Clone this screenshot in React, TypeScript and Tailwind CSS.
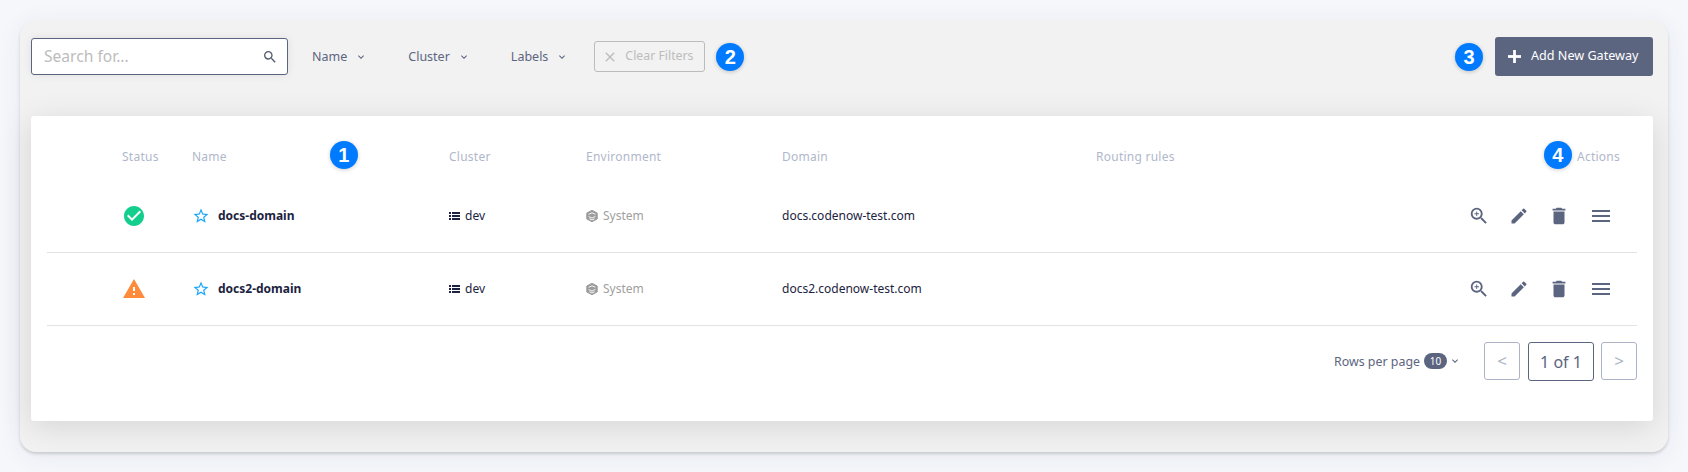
import React from "react";
import { MdZoomIn, MdEdit, MdDelete, MdMenu, MdStarBorder, MdCheckCircle, MdWarning, MdClose, MdSearch, MdKeyboardArrowDown } from "react-icons/md";

const Badge = ({ n, className = "" }: { n: string; className?: string }) => (
  <span className={"flex h-[28px] w-[28px] items-center justify-center rounded-full bg-[#007bff] text-[20px] font-bold leading-none text-white shadow-[0_1px_4px_rgba(0,0,0,0.2)] font-['Liberation_Sans',sans-serif] " + className}>{n}</span>
);

const Filter = ({ label, className }: { label: string; className: string }) => (
  <button className={"flex items-center gap-[8px] pt-[1px] text-[12.5px] text-[#5c6580] " + className}>
    {label}
    <MdKeyboardArrowDown className="h-[12px] w-[12px]" />
  </button>
);

const SystemIcon = () => (
  <svg viewBox="0 0 12 12" className="h-[12px] w-[12px] shrink-0">
    <path d="M6 0.3 11.2 3v6L6 11.7 0.8 9V3z" fill="#9c9c9c" stroke="#9c9c9c" strokeLinejoin="round" />
    <path d="M2.6 4.4 6 2.8l3.4 1.5M2.6 6.6 6 8l3.4-1.6M3.4 8.8 6 9.8l2.6-1" fill="none" stroke="#fff" strokeWidth="0.9" />
  </svg>
);

const ListIcon = () => (
  <svg viewBox="0 0 11 8" className="h-[8px] w-[11px] shrink-0" fill="#1b2340">
    <rect x="0" y="0" width="2" height="2" /><rect x="3" y="0" width="8" height="2" />
    <rect x="0" y="3" width="2" height="2" /><rect x="3" y="3" width="8" height="2" />
    <rect x="0" y="6" width="2" height="2" /><rect x="3" y="6" width="8" height="2" />
  </svg>
);

const cols = "grid grid-cols-[75px_70px_257px_137px_196px_314px_1fr_300px] items-center";

const Row = ({ name, domain, warn }: { name: string; domain: string; warn?: boolean }) => (
  <div className={cols + " h-[73px] border-b border-[#e2e3e6] text-[12px] text-[#1b2340]"}>
    <span />
    <span>
      {warn ? <MdWarning className="h-[24px] w-[24px] text-[#ff8a3c]" /> : <MdCheckCircle className="h-[24px] w-[24px] text-[#12cf8e]" />}
    </span>
    <span className="flex items-center gap-[8px] font-bold">
      <MdStarBorder className="h-[18px] w-[18px] text-[#1ba6f9]" />
      {name}
    </span>
    <span className="flex items-center gap-[5px]"><ListIcon />dev</span>
    <span className="flex items-center gap-[5px] text-[#a0a0a0]"><SystemIcon />System</span>
    <span>{domain}</span>
    <span />
    <span className="flex items-center justify-end gap-[19px] pr-[24px] text-[#5c6580]">
      <MdZoomIn className="h-[22px] w-[22px]" />
      <MdEdit className="h-[20px] w-[20px]" />
      <MdDelete className="h-[22px] w-[22px]" />
      <MdMenu className="h-[24px] w-[24px]" />
    </span>
  </div>
);

export default function App() {
  return (
    <div className="h-[472px] w-[1688px] overflow-hidden bg-[#f5f7fb] pl-[20px] pr-[20px] pt-[20px] font-['Noto_Sans',sans-serif]">
      <div className="h-[432px] rounded-[16px] bg-[#f2f2f2] pl-[11px] pr-[15px] pt-[17px] shadow-[0_2px_3px_rgba(0,0,0,0.15),0_4px_24px_rgba(40,50,90,0.07)]">
        <div className="flex h-[39px] items-center">
          <div className="flex h-[37px] w-[257px] items-center justify-between rounded-[3px] border border-[#5c6580] bg-white pl-[12px] pr-[9px] shadow-[0_0_8px_rgba(0,0,0,0.08)]">
            <span className="pt-[1px] text-[15.6px] text-[#bcbcbc]">Search for...</span>
            <MdSearch className="h-[16px] w-[16px] text-[#555b70]" />
          </div>
          <Filter label="Name" className="ml-[24px]" />
          <Filter label="Cluster" className="ml-[41px]" />
          <Filter label="Labels" className="ml-[41px]" />
          <button className="ml-[26px] flex h-[31px] w-[111px] items-center gap-[7px] rounded-[3px] border border-[#bcbcbc] pl-[7px] text-[12.3px] text-[#bcbcbc]">
            <MdClose className="h-[16px] w-[16px]" />Clear Filters
          </button>
          <Badge n="2" className="ml-[11px]" />
          <Badge n="3" className="ml-auto" />
          <button className="ml-[12px] flex h-[39px] w-[158px] items-center gap-[10px] rounded-[3px] bg-[#5c6580] pl-[13px] text-[12.6px] text-white">
            <svg viewBox="0 0 14 14" className="h-[13px] w-[13px]" fill="#fff"><rect x="5.5" y="0" width="3" height="14" /><rect x="0" y="5.5" width="14" height="3" /></svg>
            Add New Gateway
          </button>
        </div>
        <div className="mt-[40px] h-[305px] rounded-[3px] bg-white px-[16px] shadow-[0_6px_32px_rgba(0,0,0,0.12)]">
          <div className={cols + " h-[64px] pt-[17px] text-[12px] tracking-[0.25px] text-[#b0b7ca]"}>
            <span />
            <span>Status</span>
            <span className="relative">Name<Badge n="1" className="absolute left-[138px] top-[-7px]" /></span>
            <span>Cluster</span>
            <span>Environment</span>
            <span>Domain</span>
            <span>Routing rules</span>
            <span className="relative pr-[17px] text-right">Actions<Badge n="4" className="absolute right-[65px] top-[-7px]" /></span>
          </div>
          <Row name="docs-domain" domain="docs.codenow-test.com" />
          <Row name="docs2-domain" domain="docs2.codenow-test.com" warn />
          <div className="flex items-start justify-end pt-[16px]">
            <span className="mt-[11px] text-[12.4px] text-[#5c6580]">Rows per page</span>
            <span className="ml-[4px] mt-[11px] flex h-[16px] w-[23px] items-center justify-center rounded-full bg-[#5c6580] text-[10px] text-white">10</span>
            <MdKeyboardArrowDown className="ml-[2px] mt-[13px] h-[12px] w-[12px] text-[#5c6580]" />
            <button className="ml-[23px] h-[38px] w-[36px] rounded-[3px] border border-[#adb3c6] text-[17px] text-[#adb3c6]">&lt;</button>
            <div className="ml-[8px] flex h-[39px] w-[66px] items-center justify-center rounded-[3px] border border-[#5c6580] text-[16px] text-[#5c6580]">1 of 1</div>
            <button className="ml-[7px] h-[38px] w-[36px] rounded-[3px] border border-[#adb3c6] text-[17px] text-[#adb3c6]">&gt;</button>
          </div>
        </div>
      </div>
    </div>
  );
}
